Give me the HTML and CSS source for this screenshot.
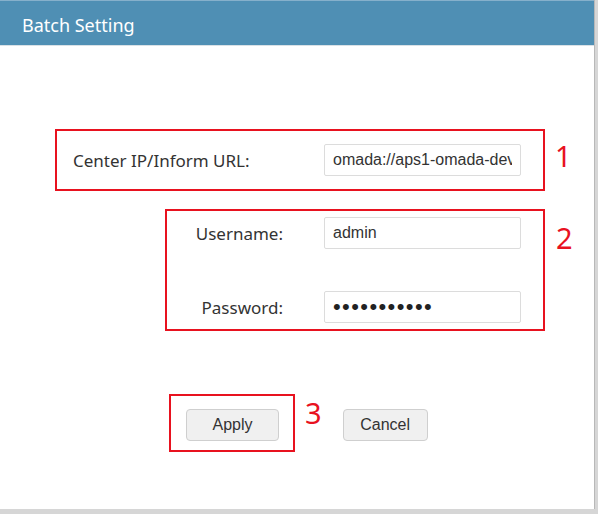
FILE: index.html
```html
<!DOCTYPE html>
<html lang="en">
<head>
  <meta charset="UTF-8">
  <title>Batch Setting</title>
  <link rel="stylesheet" href="styles.css">
</head>
<body>

<div class="dialog">
  <div class="dialog-header">Batch Setting</div>

  <div class="dialog-body">
    <div class="step-row step-one">
      <div class="mark-box url-box">
        <label for="url">Center IP/Inform URL:</label>
        <input type="text" id="url" class="field" value="omada://aps1-omada-dev">
      </div>
      <span class="step-num">1</span>
    </div>

    <div class="step-row step-two">
      <div class="mark-box login-box">
        <label for="user">Username:</label>
        <input type="text" id="user" class="field" value="admin">
        <label for="pass">Password:</label>
        <input type="password" id="pass" class="field" value="abcdefghijk">
      </div>
      <span class="step-num">2</span>
    </div>

    <div class="button-row">
      <div class="mark-box apply-box">
        <button class="btn">Apply</button>
      </div>
      <span class="step-num num-three">3</span>
      <button class="btn btn-cancel">Cancel</button>
    </div>
  </div>
</div>

</body>
</html>
```

FILE: styles.css
```css
body {
  margin: 0;
  padding: 0;
  background-color: #d6d6d6;
  font-family: 'Noto Sans', 'Open Sans', sans-serif;
  color: #333;
}

.dialog {
  width: 594px;
  height: 509px;
  background-color: #fff;
  border-right: 1px solid #b8b8b8;
  overflow: hidden;
}

.dialog-header {
  height: 46px;
  box-sizing: border-box;
  background-color: #4f8fb4;
  border-top: 1px solid #86b0cb;
  border-bottom: 1px solid #d9e1e6;
  color: #fff;
  font-size: 18px;
  line-height: 49px;
  padding-left: 22px;
  overflow: hidden;
}

.dialog-body {
  padding-top: 83px;
}

.step-row {
  display: flex;
  align-items: flex-start;
}

.step-one {
  padding-left: 55px;
}

.step-two {
  padding-left: 165px;
  margin-top: 18px;
}

.mark-box {
  border: 2px solid #e8121f;
}

.step-num {
  color: #e8121f;
  font-size: 29px;
  line-height: 1;
}

.step-one .step-num {
  margin: 12px 0 0 10px;
}

.step-two .step-num {
  margin: 14px 0 0 11px;
}

.url-box {
  height: 58px;
  display: flex;
  align-items: center;
  justify-content: space-between;
  padding: 0 22px 0 16px;
  box-sizing: content-box;
  width: 448px;
}

.url-box label,
.login-box label {
  font-size: 17px;
}

.field {
  width: 197px;
  height: 32px;
  box-sizing: border-box;
  border: 1px solid #dcdcdc;
  border-radius: 2px;
  padding: 0 8px;
  font-family: 'Liberation Sans', Arial, sans-serif;
  font-size: 16px;
  color: #333;
  outline: none;
}

.login-box {
  display: grid;
  grid-template-columns: 116px 197px;
  column-gap: 41px;
  row-gap: 42px;
  align-items: center;
  padding: 6px 22px 6px 0;
  box-sizing: border-box;
  width: 380px;
}

.login-box label {
  text-align: right;
}

.field[type="password"] {
  font-size: 22px;
  letter-spacing: 1.4px;
  color: #222;
}

.button-row {
  display: flex;
  align-items: flex-start;
  padding-left: 169px;
  margin-top: 63px;
}

.apply-box {
  width: 122px;
  height: 54px;
  box-sizing: content-box;
  display: flex;
  align-items: flex-start;
}

.apply-box .btn {
  margin: 13px 0 0 15px;
}

.num-three {
  margin: 4px 0 0 10px;
}

.btn {
  width: 93px;
  height: 32px;
  background-color: #f0f0f0;
  border: 1px solid #cfcfcf;
  border-radius: 4px;
  font-family: 'Liberation Sans', Arial, sans-serif;
  font-size: 16px;
  color: #333;
  cursor: pointer;
}

.btn-cancel {
  width: 85px;
  margin: 15px 0 0 21px;
}
```
